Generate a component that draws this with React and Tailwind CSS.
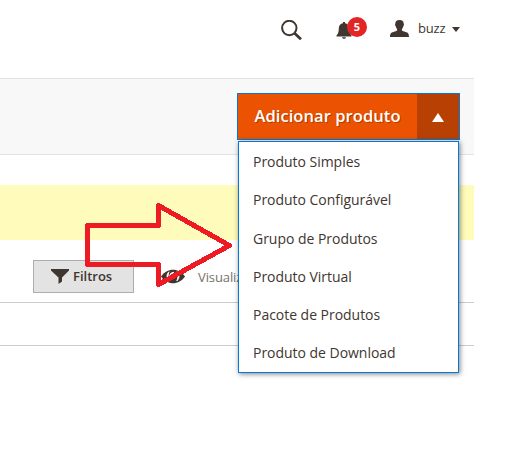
const items = [
  'Produto Simples',
  'Produto Configurável',
  'Grupo de Produtos',
  'Produto Virtual',
  'Pacote de Produtos',
  'Produto de Download',
];

function SearchIcon() {
  return (
    <svg className="mt-5 h-5 w-[21px] shrink-0" viewBox="0 0 21 20" fill="none" stroke="#41362f">
      <circle cx="8.300" cy="8" r="7.200" strokeWidth="2" />
      <path d="M13.300 12.900L20 19.300" strokeWidth="2.700" />
    </svg>
  );
}

function BellIcon() {
  return (
    <svg className="h-[17px] w-4" viewBox="0 0 16 17" fill="#41362f">
      <path d="M7 0h2v1.200c2.700.4 4.200 2.400 4.200 5 0 3.800.8 5.600 2.300 7.300v1H.5v-1c1.500-1.700 2.300-3.500 2.300-7.300 0-2.600 1.500-4.600 4.200-5z" />
      <path d="M6 15.300h4c-.4 1-1 1.500-2 1.500s-1.600-.5-2-1.500z" />
    </svg>
  );
}

function UserIcon() {
  return (
    <svg className="mt-5 ml-6 h-[17px] w-[19px] shrink-0" viewBox="0 0 19 17" fill="#41362f">
      <path d="M9.500 0c2.900 0 4.300 1.400 4.200 3.700.4.400.3 2-.4 2.400-.2 1.400-.7 2.200-1.400 3v1.200c.4.900 1.900 1.200 3.700 1.700 2.500.700 3.400 1.700 3.400 5H0c0-3.300.9-4.300 3.400-5 1.800-.5 3.300-.8 3.700-1.700V9.100C6.400 8.300 5.900 7.500 5.700 6.100 5 5.700 4.900 4.100 5.300 3.700 5.200 1.400 6.600 0 9.500 0z" />
    </svg>
  );
}

function EyeIcon() {
  return (
    <svg className="mt-[9px] ml-[27px] h-[15px] w-6 shrink-0" viewBox="0 0 24 15">
      <path d="M0 7.500C6-1.500 18-1.500 24 7.500 18 16.500 6 16.500 0 7.500z" fill="#41362f" />
      <path
        d="M8 2.800C5.200 5.200 5.400 9.600 8.200 12 7 9.200 6.800 5.600 8 2.800zM16 2.800c2.800 2.400 2.600 6.800-.2 9.200 1.200-2.800 1.400-6.400.2-9.200z"
        fill="#fff"
        stroke="#fff"
        strokeWidth=".8"
      />
      <path d="M9.300 7.800c-.3-2.400 1.200-4.200 3.700-4.200" fill="none" stroke="#fff" strokeWidth="1.900" />
    </svg>
  );
}

function Header() {
  return (
    <header className="flex h-[78px] items-start pl-[281px]">
      <SearchIcon />
      <div className="relative mt-[22px] ml-[34px] h-[17px] w-[30px] shrink-0">
        <BellIcon />
        <span className="absolute -top-[5px] left-[11px] flex size-5 items-center justify-center rounded-full bg-[#e22626] text-[11px] font-bold text-white">
          5
        </span>
      </div>
      <UserIcon />
      <span className="mt-[18px] ml-[9px] text-[13px] leading-5 tracking-[-0.2px] text-[#41362f]">buzz</span>
      <svg className="mt-[27px] ml-[7px] h-[5px] w-2 shrink-0" viewBox="0 0 8 5" fill="#41362f">
        <path d="M0 0h8L4 5z" />
      </svg>
    </header>
  );
}

function AddProduct() {
  return (
    <div className="relative z-10 h-[47px] w-[223px]">
      <div className="flex h-full border border-[#007bdb] bg-[#eb5202]">
        <button className="w-[179px] pb-px text-center text-[16.5px] font-semibold tracking-[0.07px] text-white [text-shadow:1px_1px_0_rgba(0,0,0,0.25)]">
          Adicionar produto
        </button>
        <button className="flex flex-1 items-center justify-center bg-[#b84002]">
          <svg className="mt-[2px] h-[9px] w-3" viewBox="0 0 12 9" fill="#fff">
            <path d="M6 0l6 9H0z" />
          </svg>
        </button>
      </div>
      <ul className="absolute top-12 left-px h-[232px] w-[221px] border border-[#007bdb] bg-white pt-[1.200px] shadow-[1px_1px_5px_rgba(0,0,0,0.5)]">
        {items.map((item) => (
          <li key={item} className="flex h-[38.200px] items-center pl-[14px] text-sm tracking-[-0.03px] text-[#41362f]">
            {item}
          </li>
        ))}
      </ul>
    </div>
  );
}

function Toolbar() {
  return (
    <div className="flex h-[62px] items-start pt-5 pl-[33px]">
      <button className="flex h-[33px] w-[101px] items-center border border-[#adadad] bg-[#e3e3e3] pl-[17px] text-[13px] font-semibold text-[#41362f]">
        <svg className="h-[15px] w-[18px]" viewBox="0 0 18 15" fill="#41362f">
          <path d="M0 0h18v1.500L11 8.500v4L7.500 15V8.500L0 1.500z" />
        </svg>
        <span className="ml-1">Filtros</span>
      </button>
      <EyeIcon />
      <span className="mt-[7px] ml-[13px] text-[13px] leading-5 tracking-[-0.1px] text-[#777069]">Visualiz</span>
    </div>
  );
}

export default function App() {
  return (
    <div className="relative h-[453px] w-[511px] overflow-hidden bg-white font-['Open_Sans',sans-serif]">
      <main className="w-[474px]">
        <Header />
        <section className="flex h-[77px] justify-end border-y border-[#e3e3e3] bg-[#f8f8f8] pt-[14px] pr-[14px]">
          <AddProduct />
        </section>
        <div className="mt-[30px] h-[55px] bg-[#fffbbb]" />
        <Toolbar />
        <div className="h-11 border-y border-[#ccc]" />
      </main>
      <svg className="pointer-events-none absolute top-0 left-0 z-20 h-[453px] w-[511px]" viewBox="0 0 511 453">
        <path
          d="M87.500 225.500H158.500V205.500L229.500 245.500L158.500 284.500V264.500H87.500z"
          fill="none"
          stroke="#ed1c24"
          strokeWidth="5"
          strokeLinejoin="round"
          shapeRendering="crispEdges"
        />
      </svg>
    </div>
  );
}
